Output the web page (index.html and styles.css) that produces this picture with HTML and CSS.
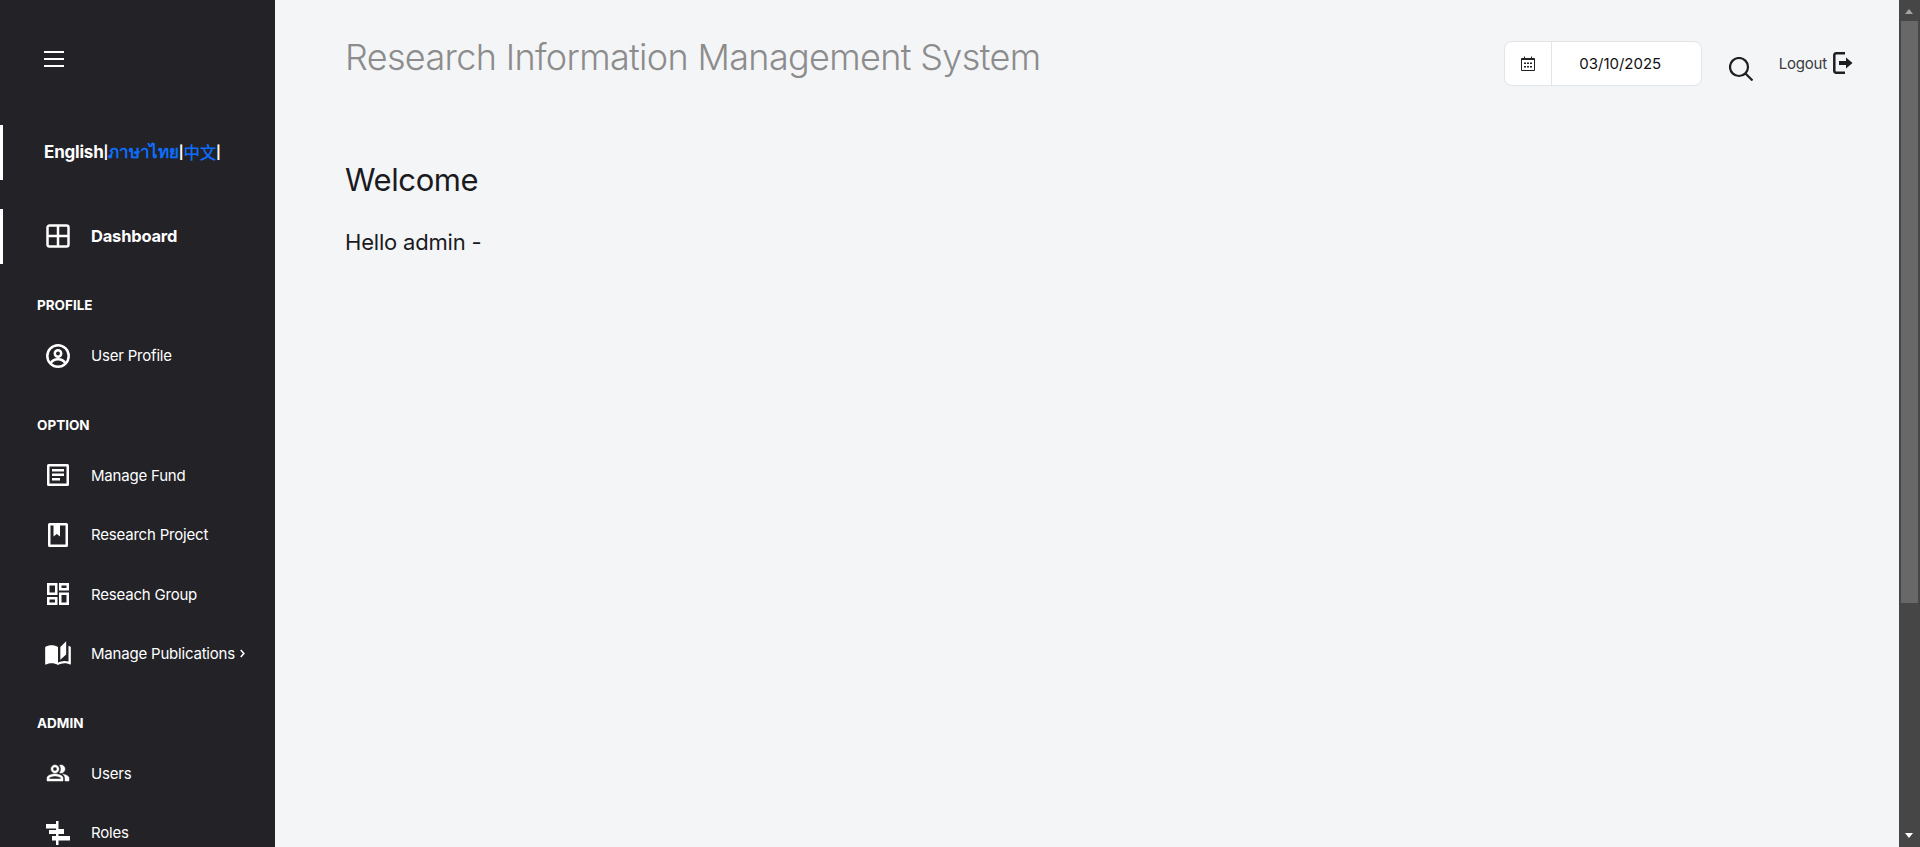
FILE: index.html
```html
<!DOCTYPE html>
<html>
<head>
    <title>Research Information Management System</title>
    <link rel="stylesheet" href="styles.css">
</head>
<body>
    <aside class="sidebar">
        <button class="menu-toggle" aria-label="Menu">
            <span></span><span></span><span></span>
        </button>

        <div class="nav-item lang-row active">
            <span class="lang-current">English</span><span class="sep">|</span><a href="#">ภาษาไทย</a><span class="sep">|</span><a href="#" class="lang-zh">中文</a><span class="sep">|</span>
        </div>

        <a href="#" class="nav-item nav-main active">
            <svg class="nav-icon" viewBox="0 0 24 24"><path fill="none" stroke="#fff" stroke-width="2.5" d="M3.500 1.500h17a2 2 0 0 1 2 2v17a2 2 0 0 1-2 2h-17a2 2 0 0 1-2-2v-17a2 2 0 0 1 2-2zM12 1.500v21M1.500 12h21"/></svg>
            Dashboard
        </a>

        <div class="nav-label">Profile</div>
        <a href="#" class="nav-item">
            <svg class="nav-icon" viewBox="0 0 24 24"><g fill="none" stroke="#fff" stroke-width="2.5"><circle cx="12" cy="12" r="10.700"/><circle cx="12" cy="9.500" r="3.200"/><path d="M4.500 19.500c1.500-3 4.500-4.200 7.500-4.200s6 1.200 7.500 4.200"/></g></svg>
            User Profile
        </a>

        <div class="nav-label">Option</div>
        <a href="#" class="nav-item">
            <svg class="nav-icon" viewBox="0 0 24 24"><path fill="#fff" fill-rule="evenodd" d="M2.500 1h19A1.500 1.500 0 0 1 23 2.500v19a1.500 1.500 0 0 1-1.500 1.500h-19A1.500 1.500 0 0 1 1 21.500v-19A1.500 1.500 0 0 1 2.500 1zM3.500 3.500v17h17v-17zM6 6h12v2.500H6zM6 10.500h12V13H6zM6 15h8v2.500H6z"/></svg>
            Manage Fund
        </a>
        <a href="#" class="nav-item">
            <svg class="nav-icon" viewBox="0 0 24 24"><path fill="#fff" fill-rule="evenodd" d="M3.500 0h17A1.500 1.500 0 0 1 22 1.500v21a1.500 1.500 0 0 1-1.500 1.500h-17A1.500 1.500 0 0 1 2 22.500v-21A1.500 1.500 0 0 1 3.500 0zM4.500 2.500v19h15v-19h-5.500v11l-3.200-2.500L7.500 13.500v-11z"/></svg>
            Research Project
        </a>
        <a href="#" class="nav-item">
            <svg class="nav-icon" viewBox="0 0 24 24"><path fill="#fff" d="M20.500 3.500v2.500h-5V3.500h5M9 3.500v7H3.500v-7H9m11.500 9.500v7.500h-5V13h5M9 17.500v3H3.500v-3H9M23 1H13v7.500h10V1zM11.500 1H1v12h10.500V1zM23 10.500H13V23h10V10.500zM11.500 15H1v8h10.500v-8z"/></svg>
            Reseach Group
        </a>
        <a href="#" class="nav-item">
            <svg class="nav-icon nav-icon-wide" viewBox="0 0 24 24"><path fill="#fff" d="M19 1l-5 5v11l5-4.500V1zM1 6v14.650c0 .25.25.5.5.5.1 0 .15-.05.25-.05C3.100 20.450 5.050 20 6.500 20c1.950 0 4.050.4 5.500 1.500V6c-1.450-1.100-3.550-1.500-5.500-1.500S2.450 4.900 1 6zm22 13.500V6c-.6-.45-1.250-.8-2-1.050v13.500c-1.100-.35-2.300-.5-3.500-.5-1.700 0-4.150.65-5.500 1.500v2.050c1.350-.85 3.800-1.500 5.500-1.500 1.650 0 3.350.3 4.750 1.050.1.05.15.05.25.05.25 0 .5-.25.5-.5v-1.100z"/></svg>
            Manage Publications
            <svg class="nav-arrow" viewBox="0 0 8 10"><path fill="none" stroke="#fff" stroke-width="1.800" d="M2 1l3.500 4L2 9"/></svg>
        </a>

        <div class="nav-label">Admin</div>
        <a href="#" class="nav-item">
            <svg class="nav-icon" viewBox="0 0 24 24"><path fill="#fff" stroke="#fff" stroke-width=".5" d="M16.670 13.130C18.040 14.060 19 15.320 19 17v3h4v-3c0-2.180-3.570-3.470-6.330-3.870zM15 12c2.210 0 4-1.790 4-4s-1.790-4-4-4c-.47 0-.91.1-1.330.24C14.500 5.270 15 6.580 15 8s-.5 2.730-1.330 3.760c.42.14.86.24 1.330.24zM9 12c2.210 0 4-1.790 4-4s-1.790-4-4-4-4 1.790-4 4 1.790 4 4 4zm0-6c1.100 0 2 .9 2 2s-.9 2-2 2-2-.9-2-2 .9-2 2-2zM9 13c-2.670 0-8 1.340-8 4v3h16v-3c0-2.660-5.330-4-8-4zm6 5H3v-.99C3.200 16.290 6.300 15 9 15s5.800 1.290 6 2v1z"/></svg>
            Users
        </a>
        <a href="#" class="nav-item">
            <svg class="nav-icon" viewBox="0 0 24 24"><path fill="#fff" d="M10 0h2.500v24H10zM0 3h10v4.500H0zM3 9h7v4H3zM12.500 8H18v5h-5.500zM12.500 15H24v4.500H12.500zM6 15h4v4.500H6z"/></svg>
            Roles
        </a>
    </aside>

    <main class="content">
        <header class="topbar">
            <h1 class="page-title">Research Information Management System</h1>
            <div class="topbar-tools">
                <div class="date-box">
                    <span class="date-icon">
                        <svg width="16" height="16" viewBox="0 0 16 16"><path fill="none" stroke="#222" d="M1.500 2.500h13v12h-13zM4.500 .5v3M11.500 .5v3"/><path fill="#222" d="M1.500 2.500h13v1.500h-13zM4 6.500h2V8H4zM7 6.500h2V8H7zM10 6.500h2V8h-2zM4 10h2v1.500H4zM7 10h2v1.500H7zM10 10h2v1.500h-2z"/></svg>
                    </span>
                    <span class="date-value">03/10/2025</span>
                </div>
                <svg class="search-icon" width="24" height="24" viewBox="0 0 24 24"><g fill="none" stroke="#1e1e22" stroke-width="2.200"><circle cx="10" cy="10" r="9"/><path d="M16.500 16.500l7 7"/></g></svg>
                <a href="#" class="logout">Logout
                    <svg width="20" height="22" viewBox="0 0 20 22"><path fill="none" stroke="#1e1e22" stroke-width="2.500" d="M12 1.300H3a1.700 1.700 0 0 0-1.700 1.700v16A1.700 1.700 0 0 0 3 20.700h9"/><path fill="#1e1e22" d="M6 9h7V5.500l6.500 5.500-6.500 5.500V13H6z"/></svg>
                </a>
            </div>
        </header>
        <h2 class="welcome">Welcome</h2>
        <p class="hello">Hello admin -</p>
    </main>

    <div class="scrollbar">
        <span class="arrow-up"></span>
        <div class="scroll-thumb"></div>
        <span class="arrow-down"></span>
    </div>
</body>
</html>
```

FILE: styles.css
```css
html, body { height: 100%; }
body { margin: 0; display: flex; height: 847px; overflow: hidden; background: #f4f5f7; font-family: Inter, "Noto Sans CJK SC", sans-serif; color: #1b1b1f; }
a { text-decoration: none; color: inherit; }

.sidebar { width: 275px; flex: none; height: 847px; overflow: hidden; background: #222227; color: #fff; }
.menu-toggle { display: flex; flex-direction: column; justify-content: space-between; width: 20px; height: 16px; margin: 51px 0 58px 44px; padding: 0; border: 0; background: none; }
.menu-toggle span { display: block; height: 2px; background: #fff; }

.nav-item { display: flex; align-items: center; height: 55px; margin-bottom: 4.5px; padding: 0 0 1px 46px; font-size: 15px; letter-spacing: -0.2px; box-sizing: border-box; }
.nav-item.active { border-left: 3px solid #fff; padding-left: 43px; }
.nav-icon { width: 24px; height: 24px; flex: none; margin-right: 21px; }
.nav-icon-wide { width: 28px; height: 28px; margin: 0 19px 0 -2px; }
.nav-arrow { width: 7px; height: 9px; margin-left: 4px; }
.nav-main { font-size: 16.5px; font-weight: 700; }

.lang-row { margin-bottom: 29px; padding-left: 41px !important; padding-bottom: 2px; font-size: 17px; font-weight: 700; }
.lang-row a { color: #0d6efd; }
.lang-row .lang-zh { font-size: 16.5px; font-weight: 500; }
.sep { font-size: 13px; }

.nav-label { height: 14px; line-height: 14px; margin: 34px 0 16.5px 37px; font-size: 13.5px; font-weight: 700; text-transform: uppercase; }

.content { flex: 1; padding: 0 46px 0 70px; min-width: 0; }
.topbar { display: flex; justify-content: space-between; height: 124px; }
.page-title { margin: 35px 0 0; font-size: 36px; line-height: 44px; font-weight: 300; color: #8c8c8c; letter-spacing: -0.66px; }
.topbar-tools { display: flex; align-items: flex-start; }

.date-box { display: flex; width: 198px; height: 45px; margin-top: 41px; background: #fff; border: 1px solid #e2e5e8; border-radius: 8px; box-sizing: border-box; }
.date-icon { display: flex; align-items: center; justify-content: center; width: 46px; border-right: 1px solid #e2e5e8; }
.date-value { flex: 1; padding-right: 12px; text-align: center; line-height: 43px; font-size: 15px; color: #111; }

.search-icon { margin: 57px 0 0 27px; }
.logout { display: flex; align-items: center; gap: 6px; height: 22px; margin: 52px 0 0 26px; font-size: 15px; color: #3a3a40; letter-spacing: -0.2px; }

.welcome { margin: 36px 0 0; font-size: 31px; line-height: 40px; font-weight: 400; letter-spacing: -0.4px; }
.hello { margin: 28px 0 0; font-size: 22px; line-height: 28px; letter-spacing: -0.2px; }

.scrollbar { position: relative; width: 21px; flex: none; background: #464646; }
.scroll-thumb { position: absolute; top: 21px; left: 2px; width: 17px; height: 582px; background: #686868; }
.arrow-up, .arrow-down { position: absolute; left: 6px; width: 0; height: 0; border-left: 4.5px solid transparent; border-right: 4.5px solid transparent; }
.arrow-up { top: 9px; border-bottom: 5px solid #a3a3a3; }
.arrow-down { bottom: 9px; border-top: 5px solid #fff; }
```
